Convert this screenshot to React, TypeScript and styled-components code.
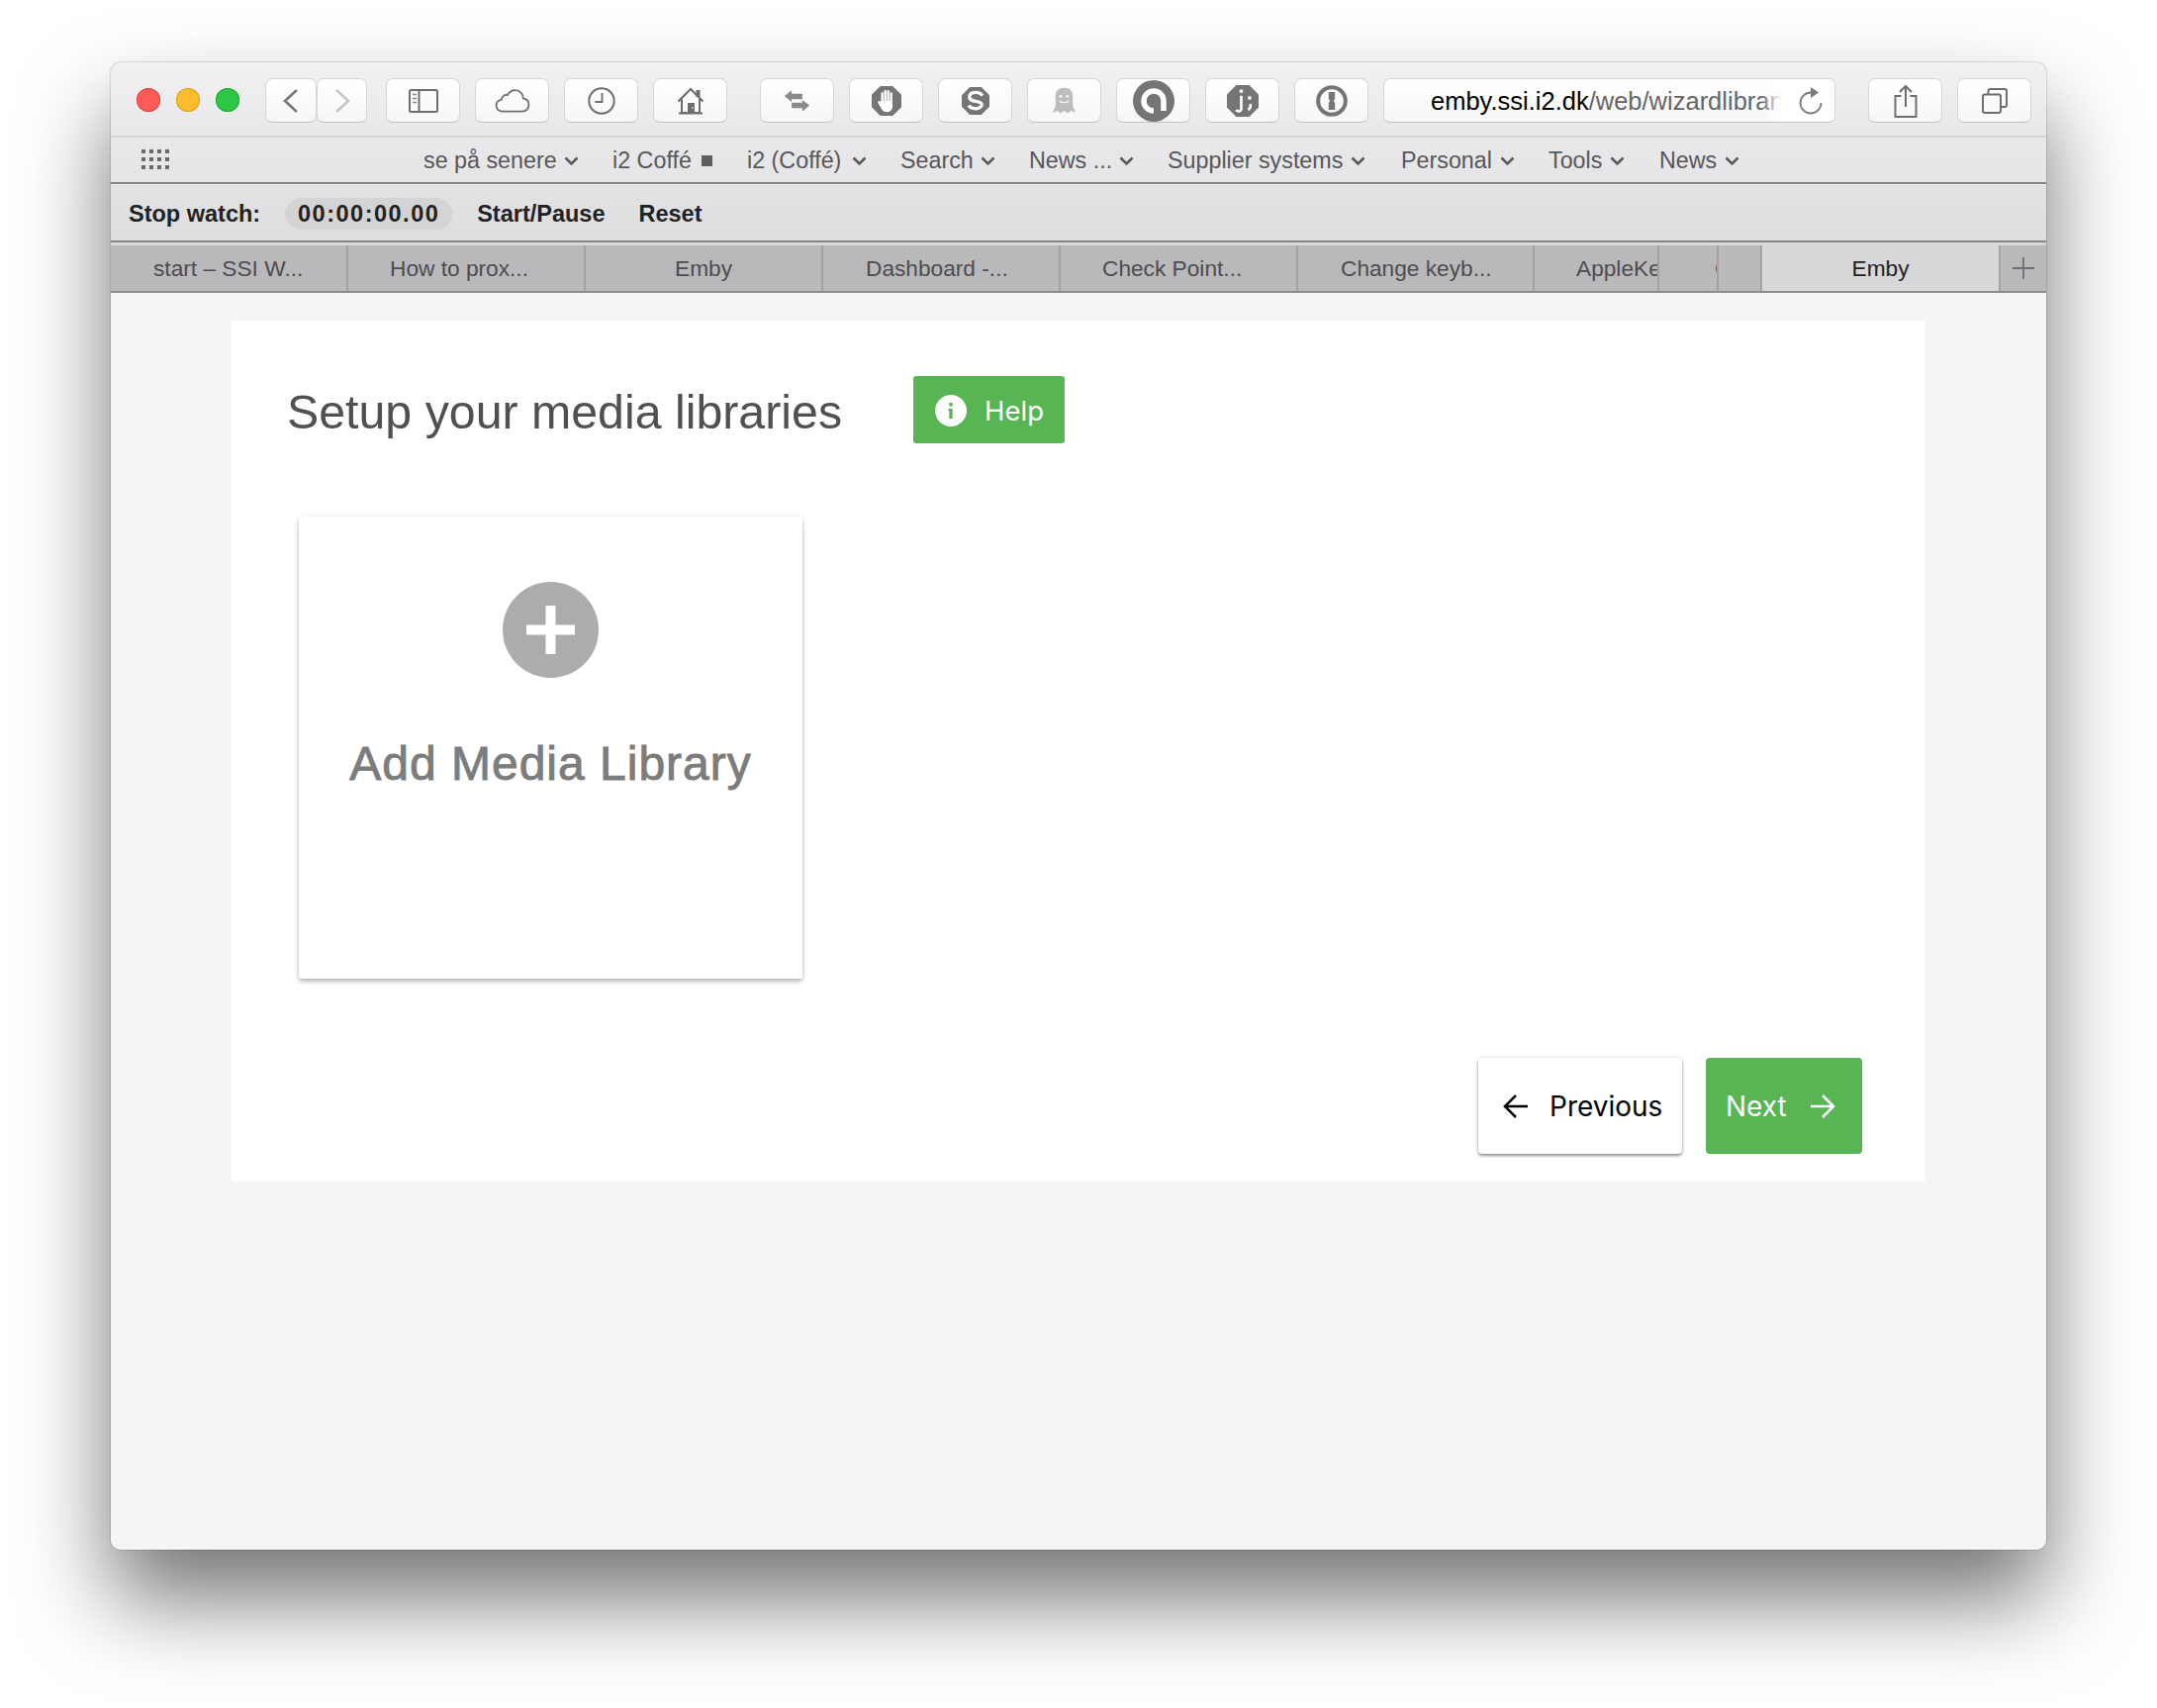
import React from 'react';
import styled, { createGlobalStyle } from 'styled-components';

const Global = createGlobalStyle`
  html, body { margin: 0; padding: 0; background: #fff; }
  body { font-family: "Liberation Sans", Arial, sans-serif; }
`;
const Page = styled.div`
  width: 2180px; height: 1726px; box-sizing: border-box; padding: 63px 112px 0; overflow: hidden;
`;
const Win = styled.div`
  width: 1956px; height: 1503px; display: flex; flex-direction: column; border-radius: 10px; overflow: hidden;
  box-shadow: 0 50px 90px rgba(0,0,0,.55), 0 0 1.5px rgba(0,0,0,.55);
  background: #f5f5f5;
`;
const Toolbar = styled.div`
  height: 76px; flex: none; box-sizing: border-box; padding: 16px 16px 0 26px; display: flex; align-items: flex-start;
  background: linear-gradient(#f1f0f2, #e8e7e9); border-bottom: 2px solid #d3d2d4;
`;
const Lights = styled.div`display: flex; gap: 16px; margin: 10px 26px 0 0;`;
const Light = styled.span<{ $c: string; $b: string }>`
  width: 24px; height: 24px; border-radius: 50%; background: ${p => p.$c}; box-shadow: inset 0 0 0 1px ${p => p.$b};
`;
const Btn = styled.div<{ $w?: number; $ml?: number }>`
  width: ${p => p.$w ?? 75}px; height: 45px; flex: none; margin-left: ${p => p.$ml ?? 15}px; box-sizing: border-box;
  display: flex; align-items: center; justify-content: center;
  background: linear-gradient(#ffffff, #f6f6f6); border: 1px solid #d6d5d7; border-bottom-color: #c2c1c3; border-radius: 7px;
`;
const Url = styled(Btn)`
  width: 457px; justify-content: flex-start; padding: 2px 0 0 47px; position: relative; overflow: hidden;
  font-size: 25.5px; color: #000; white-space: nowrap;
`;
const Path = styled.span`color: #666;`;
const Fade = styled.span`
  position: absolute; right: 0; top: 0; bottom: 0; width: 74px; display: flex; align-items: center; justify-content: flex-end; padding-right: 11px; box-sizing: border-box;
  background: linear-gradient(90deg, rgba(255,255,255,0), #fff 28%);
`;
const Bookmarks = styled.div`
  height: 47px; flex: none; box-sizing: border-box; padding: 2px 0 0 316px; display: flex; align-items: center; position: relative;
  background: linear-gradient(#e9e8ea, #e5e4e6); border-bottom: 2px solid #858487; color: #58575a; font-size: 23.3px;
`;
const Grid = styled.svg`position: absolute; left: 31px; top: 12px;`;
const Mark = styled.span<{ $w: number; $gap: number }>`
  width: ${p => p.$w}px; flex: none; display: flex; align-items: center; gap: ${p => p.$gap}px; white-space: nowrap;
`;
const Watch = styled.div`
  height: 59px; flex: none; box-sizing: border-box; padding: 2px 0 0 18px; display: flex; align-items: center;
  background: linear-gradient(#e3e2e4, #dddcde); border-top: 1px solid #efeff0; border-bottom: 2px solid #858487;
  font-weight: 700; font-size: 23.5px; color: #222;
`;
const Pill = styled.span`
  height: 32px; width: 169px; margin: 0 25px 0 25px; border-radius: 16px; background: #d4d3d5; display: flex; align-items: center; justify-content: center; letter-spacing: 1.5px;
`;
const Gap = styled.span`width: 34px;`;
const Tabs = styled.div`
  height: 51px; flex: none; box-sizing: border-box; display: flex; background: #b9b8ba; border-top: 3px solid #d8d7d9; border-bottom: 2px solid #8d8c8f;
  font-size: 22.7px; color: #4d4c4f;
`;
const Tab = styled.div<{ $w: number; $active?: boolean; $pl?: number }>`
  width: ${p => p.$w}px; flex: none; box-sizing: border-box; display: flex; align-items: center; overflow: hidden; white-space: nowrap;
  justify-content: ${p => p.$pl != null ? 'flex-start' : 'center'};
  padding-left: ${p => p.$pl ?? 0}px;
  border-right: 2px solid #a3a2a5;
  background: ${p => p.$active ? '#d8d7d9' : 'transparent'}; color: ${p => p.$active ? '#222' : 'inherit'};
`;
const Content = styled.div`flex: 1; padding: 28px 122px 0; background: #f5f5f5;`;
const Panel = styled.div`
  width: 1712px; height: 870px; box-sizing: border-box; background: #fff; padding: 56px 64px 0 56px; display: flex; flex-direction: column;
`;
const Head = styled.div`display: flex; align-items: center; height: 68px;`;
const Title = styled.h1`
  margin: 4px 0 0; font-weight: 400; font-size: 48.3px; color: #505050; line-height: 68px; white-space: nowrap;
`;
const Help = styled.div`
  margin-left: 72px; width: 153px; height: 68px; flex: none; box-sizing: border-box; padding: 1px 0 0 22px; border-radius: 3px; background: #57b554; color: #fff;
  display: flex; align-items: center; gap: 18px; font-family: Inter, sans-serif; font-size: 27.5px;
`;
const Card = styled.div`
  width: 509px; height: 467px; margin: 74px 0 0 12px; border-radius: 3px; background: #fff; box-shadow: 0 3px 4px rgba(0,0,0,.25), 0 0 6px rgba(0,0,0,.07);
  display: flex; flex-direction: column; align-items: center; padding-top: 66px; box-sizing: border-box; flex: none;
`;
const Plus = styled.div`width: 97px; height: 97px; border-radius: 50%; background: #acacac; display: flex; align-items: center; justify-content: center;`;
const CardLabel = styled.div`
  margin-top: 57px; font-size: 48px; line-height: 60px; color: #7c7c7c; white-space: nowrap; letter-spacing: 1px; -webkit-text-stroke: .9px #7c7c7c;
`;
const Footer = styled.div`display: flex; justify-content: flex-end; gap: 24px; margin-top: 80px;`;
const Action = styled.div<{ $primary?: boolean; $w: number; $pl: number; $gap: number }>`
  width: ${p => p.$w}px; height: 97px; box-sizing: border-box; border-radius: 4px; display: flex; align-items: center; gap: ${p => p.$gap}px; padding-left: ${p => p.$pl}px;
  font-family: Inter, sans-serif; font-size: 28px;
  background: ${p => p.$primary ? '#57b554' : '#fff'}; color: ${p => p.$primary ? '#fff' : '#000'};
  box-shadow: ${p => p.$primary ? 'none' : '0 2px 3px rgba(0,0,0,.4), 0 0 4px rgba(0,0,0,.12)'};
`;
const Square = styled.span`width: 11px; height: 11px; background: #5f5e61;`;

const G = '#757575';
const Chev = () => (
  <svg width="15" height="10" viewBox="0 0 15 10"><path d="M1.5 1.5 7.5 7.5l6-6" fill="none" stroke="#5a595c" strokeWidth="2.6" /></svg>
);
const Octagon = ({ r = 21, c = G }: { r?: number; c?: string }) => {
  const k = r * 0.414;
  return <path d={`M${-k} ${-r}H${k}L${r} ${-k}V${k}L${k} ${r}H${-k}L${-r} ${k}V${-k}Z`} fill={c} />;
};

const icons: Record<string, React.ReactNode> = {
  back: <svg width="20" height="28" viewBox="0 0 20 28"><path d="M16 3 4 14l12 11" fill="none" stroke="#777" strokeWidth="2.6" /></svg>,
  fwd: <svg width="20" height="28" viewBox="0 0 20 28"><path d="M4 3 16 14 4 25" fill="none" stroke="#c6c6c6" strokeWidth="2.6" /></svg>,
  side: <svg width="30" height="24" viewBox="0 0 30 24"><rect x="1" y="1" width="28" height="22" rx="1.5" fill="none" stroke="#6e6e6e" strokeWidth="2" /><path d="M10.500 1v22" stroke="#6e6e6e" strokeWidth="2" /><path d="M4 5.500h4M4 9.500h4M4 13.500h4" stroke="#8a8a8a" strokeWidth="1.6" /></svg>,
  cloud: <svg width="36" height="24" viewBox="0 0 38 26"><path d="M8.500 24.500C4 24.500 1.200 21.500 1.200 18c0-3.400 2.400-5.800 5.600-6.300C7.500 7.500 10.500 5.800 13.500 6.600 15.500 3 18.700 1.200 22 1.200c5 0 8.600 4 8.600 9 3.700.6 6.200 3.500 6.200 7 0 4-3 7.300-7 7.300z" fill="none" stroke="#6e6e6e" strokeWidth="1.900" /></svg>,
  clock: <svg width="28" height="28" viewBox="0 0 28 28"><circle cx="14" cy="14" r="12.700" fill="none" stroke="#6e6e6e" strokeWidth="2" /><path d="M14.500 6v9H7.500" fill="none" stroke="#6e6e6e" strokeWidth="1.800" /></svg>,
  home: <svg width="28" height="28" viewBox="0 0 28 28"><rect x="19.500" y="3" width="4" height="7" fill="#6e6e6e" /><path d="M1.500 14.500 14 2l12.500 12.500M5 12v14h18V12" fill="none" stroke="#6e6e6e" strokeWidth="2" /><rect x="11" y="16" width="7" height="10" fill="#6e6e6e" /><circle cx="16" cy="21" r=".8" fill="#fff" /><path d="M2 26.500h24" stroke="#6e6e6e" strokeWidth="2" /></svg>,
  swap: <svg width="27" height="22" viewBox="0 0 30 24"><path d="M1 6.500 9 0v4h12v6H9v3.500z" fill="#8a8a8a" /><path d="M29 17 21 24v-4H9v-6h12v-3z" fill="#8a8a8a" /></svg>,
  stop: (
    <svg width="30" height="30" viewBox="-20 -20 40 40">
      <Octagon r={20} />
      <g stroke="#fff" strokeWidth="3.200" strokeLinecap="round" fill="none">
        <path d="M-5.800 2V-10M-1.800 2V-13M2.200 2V-13M6.200 2V-10" />
      </g>
      <path d="M-7.400 0H8V7c0 5-3 8-7.500 8-4 0-6-2-8-5.500L-11.500 2.500c-1-2 1.500-3.500 3-1.500z" fill="#fff" />
    </svg>
  ),
  sss: <svg width="28" height="28" viewBox="-18 -18 36 36"><Octagon r={18} /><path d="M9 -7C7-10 3-11 0-11c-5 0-8 2-8 6 0 8 16 3 16 10 0 3-4 5-8 5-4 0-7-1-9-4" fill="none" stroke="#fff" strokeWidth="4.200" /></svg>,
  ghost: <svg width="25" height="28" viewBox="0 0 26 36" preserveAspectRatio="none"><path d="M13 1C6 1 4 6 4 12v12l-3 9 5-2 3 3 4-3 4 3 3-3 5 2-3-9V12c0-6-2-11-9-11z" fill="#bdbdbd" /><circle cx="9.500" cy="12" r="1.700" fill="#f5f5f5" /><circle cx="16.500" cy="12" r="1.700" fill="#f5f5f5" /><path d="M8 18c3 3 7 3 10 0" fill="none" stroke="#f5f5f5" strokeWidth="1.500" /></svg>,
  ring: <svg width="42" height="42" viewBox="0 0 42 42"><circle cx="21" cy="21" r="21" fill={G} /><path d="M31 31V21a10 10 0 1 0-10 10" fill="none" stroke="#fff" strokeWidth="5.500" /></svg>,
  jsemi: <svg width="32" height="32" viewBox="-21 -21 42 42"><Octagon r={21} /><circle cx="-2" cy="-13" r="2.500" fill="#fff" /><path d="M-2-7V10c0 4-4 5-7 2" fill="none" stroke="#fff" strokeWidth="3.500" /><circle cx="9" cy="-4" r="2.500" fill="#fff" /><path d="M10 4c1 4 0 6-3 8" fill="none" stroke="#fff" strokeWidth="3.500" /></svg>,
  pass: <svg width="32" height="32" viewBox="0 0 32 32"><circle cx="16" cy="16" r="13.800" fill="none" stroke={G} strokeWidth="4" /><path d="M12.800 7h6.400v7l-1.500 2 1.500 2v7h-6.400v-7l1.500-2-1.500-2z" fill={G} /></svg>,
  reload: <svg width="26" height="28" viewBox="0 0 26 28"><path d="M13 5.500a10.500 10.500 0 1 0 10.500 10.500" fill="none" stroke="#7a7a7a" strokeWidth="1.800" /><path d="M13 0l8 5.500-8 5.500z" fill="#7a7a7a" /></svg>,
  share: <svg width="24" height="34" viewBox="0 0 24 34"><path d="M7.500 12H1.500v21h21V12h-6" fill="none" stroke="#6e6e6e" strokeWidth="2" /><path d="M12 23V2M6 8l6-6 6 6" fill="none" stroke="#6e6e6e" strokeWidth="2" /></svg>,
  copy: <svg width="26" height="26" viewBox="0 0 26 26"><rect x="1" y="6.500" width="18" height="18.500" rx="2" fill="none" stroke="#6e6e6e" strokeWidth="2" /><path d="M6.500 6V3a2 2 0 0 1 2-2H23a2 2 0 0 1 2 2v14a2 2 0 0 1-2 2h-3.500" fill="none" stroke="#6e6e6e" strokeWidth="2" /></svg>,
};

const marks: [string, number, 'chev' | 'square', number][] = [
  ['se på senere', 191, 'chev', 7],
  ['i2 Coffé', 136, 'square', 10],
  ['i2 (Coffé)', 155, 'chev', 11],
  ['Search', 130, 'chev', 7],
  ['News ...', 140, 'chev', 7],
  ['Supplier systems', 236, 'chev', 8],
  ['Personal', 149, 'chev', 8],
  ['Tools', 112, 'chev', 8],
  ['News', 100, 'chev', 8],
];
const tabs: [string, number, number | undefined][] = [
  ['start – SSI W...', 240, 43],
  ['How to prox...', 240, 42],
  ['Emby', 240, undefined],
  ['Dashboard -...', 240, 43],
  ['Check Point...', 240, 42],
  ['Change keyb...', 239, 43],
];

export default function App() {
  return (
    <Page>
      <Global />
      <Win>
        <Toolbar>
          <Lights>
            <Light $c="#fc5b57" $b="#e2463f" />
            <Light $c="#fdbc2e" $b="#dfa023" />
            <Light $c="#2ac845" $b="#1eaa2d" />
          </Lights>
          <Btn $w={52} $ml={0}>{icons.back}</Btn>
          <Btn $w={51} $ml={0}>{icons.fwd}</Btn>
          <Btn $ml={19}>{icons.side}</Btn>
          <Btn>{icons.cloud}</Btn>
          <Btn>{icons.clock}</Btn>
          <Btn>{icons.home}</Btn>
          <Btn $ml={33}>{icons.swap}</Btn>
          <Btn>{icons.stop}</Btn>
          <Btn>{icons.sss}</Btn>
          <Btn>{icons.ghost}</Btn>
          <Btn>{icons.ring}</Btn>
          <Btn>{icons.jsemi}</Btn>
          <Btn>{icons.pass}</Btn>
          <Url>emby.ssi.i2.dk<Path>/web/wizardlibrary.html</Path><Fade>{icons.reload}</Fade></Url>
          <Btn $ml={33}>{icons.share}</Btn>
          <Btn>{icons.copy}</Btn>
        </Toolbar>
        <Bookmarks>
          <Grid width="28" height="20" viewBox="0 0 28 20">
            {[0, 1, 2].flatMap(r => [0, 1, 2, 3].map(c => <rect key={`${r}${c}`} x={c * 8} y={r * 8} width="4" height="4" fill="#6a696c" />))}
          </Grid>
          {marks.map(([t, w, k, g]) => (
            <Mark key={t + w} $w={w} $gap={g}>{t}{k === 'chev' ? <Chev /> : <Square />}</Mark>
          ))}
        </Bookmarks>
        <Watch>
          Stop watch:
          <Pill>00:00:00.00</Pill>
          Start/Pause
          <Gap />
          Reset
        </Watch>
        <Tabs>
          {tabs.map(([t, w, pl]) => <Tab key={t} $w={w} $pl={pl}>{t}</Tab>)}
          <Tab $w={126} $pl={42}>AppleKeyboard</Tab>
          <Tab $w={60} $pl={56}>Calendar</Tab>
          <Tab $w={44} />
          <Tab $w={241} $active>Emby</Tab>
          <Tab $w={48}><svg width="24" height="24" viewBox="0 0 24 24"><path d="M12 1v22M1 12h22" stroke="#6f6e71" strokeWidth="1.800" /></svg></Tab>
        </Tabs>
        <Content>
          <Panel>
            <Head>
              <Title>Setup your media libraries</Title>
              <Help>
                <svg width="32" height="32" viewBox="0 0 32 32"><circle cx="16" cy="16" r="16" fill="#fff" /><path d="M13.500 14h4.200v10h-3.400v-8h-.8z" fill="#57b554" /><rect x="14.300" y="8" width="3.400" height="3.400" fill="#57b554" /></svg>
                Help
              </Help>
            </Head>
            <Card>
              <Plus><svg width="49" height="49" viewBox="0 0 49 49"><path d="M19.500 0h10v19.500h19.500v10H29.500v19.500h-10V29.500H0v-10h19.500z" fill="#fff" /></svg></Plus>
              <CardLabel>Add Media Library</CardLabel>
            </Card>
            <Footer>
              <Action $w={206} $pl={25} $gap={21}>
                <svg width="26" height="26" viewBox="0 0 26 26"><path d="M25 13H2M13 2 2 13l11 11" fill="none" stroke="#000" strokeWidth="2.600" /></svg>
                Previous
              </Action>
              <Action $w={158} $pl={20} $gap={23} $primary>
                Next
                <svg width="26" height="26" viewBox="0 0 26 26"><path d="M1 13h23M13 2l11 11-11 11" fill="none" stroke="#fff" strokeWidth="2.600" /></svg>
              </Action>
            </Footer>
          </Panel>
        </Content>
      </Win>
    </Page>
  );
}
